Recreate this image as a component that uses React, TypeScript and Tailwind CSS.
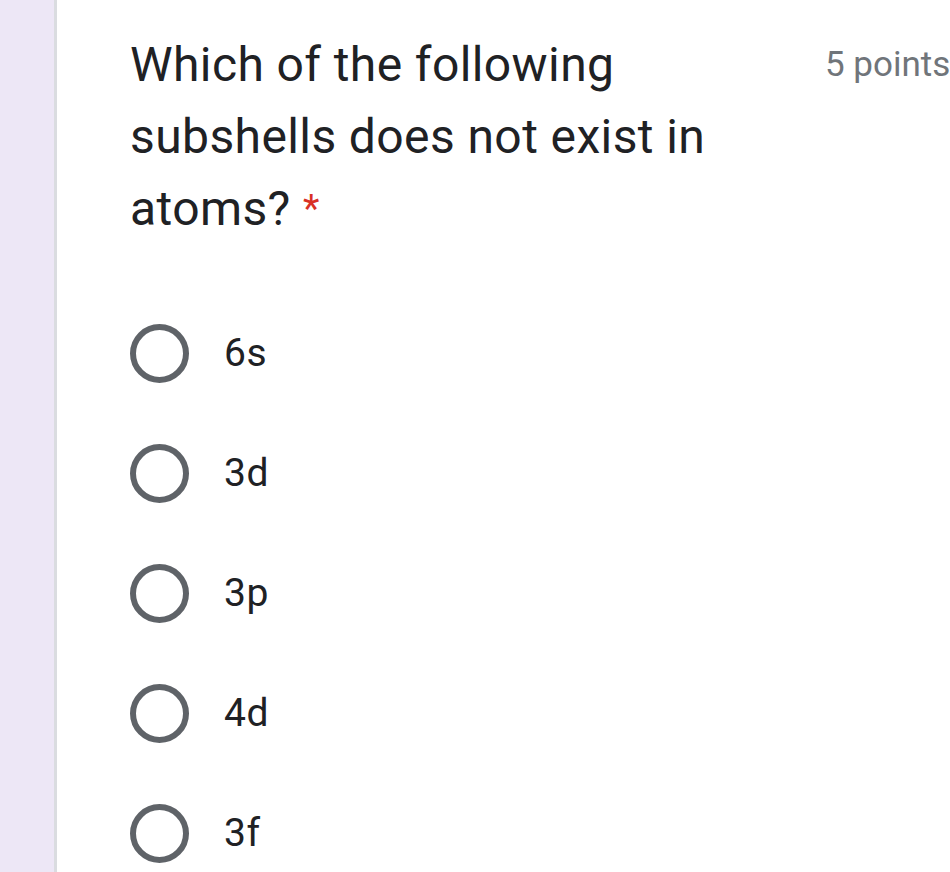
import React from 'react';

const opciones = ['6s', '3d', '3p', '4d', '3f'];

function Radio() {
  return (
    <div className="w-[59px] h-[59px] rounded-full border-[6px] border-[#5f6368] shrink-0" />
  );
}

export default function App() {
  return (
    <div
      className="flex w-[950px] h-[872px] overflow-hidden bg-white"
      style={{ fontFamily: 'Roboto, "Liberation Sans", sans-serif' }}
    >
      {/* franja lateral */}
      <div className="w-[54px] shrink-0 bg-[#ede7f6]" />
      <div className="w-[3px] shrink-0 bg-[#dadce0]" />

      <div className="flex-1 pl-[73px] pt-[29px] min-w-0">
        {/* cabecera de la pregunta */}
        <div className="flex items-start">
          <div className="w-[660px] shrink-0 text-[48px] leading-[72px] tracking-[0.4px] text-[#202124]">
            Which of the following subshells does not exist in atoms?{' '}
            <span className="text-[38px] align-[3px] text-[#d93025]">*</span>
          </div>
          <div className="ml-[35px] shrink-0 whitespace-nowrap text-[35px] leading-[72px] text-[#70757a]">
            5 points
          </div>
        </div>

        {/* opciones */}
        <div className="mt-[48px] flex flex-col">
          {opciones.map(op => (
            <div key={op} className="h-[120px] flex items-center">
              <Radio />
              <span className="ml-[35px] text-[39px] leading-none tracking-[0.5px] text-[#202124]">
                {op}
              </span>
            </div>
          ))}
        </div>
      </div>
    </div>
  );
}
